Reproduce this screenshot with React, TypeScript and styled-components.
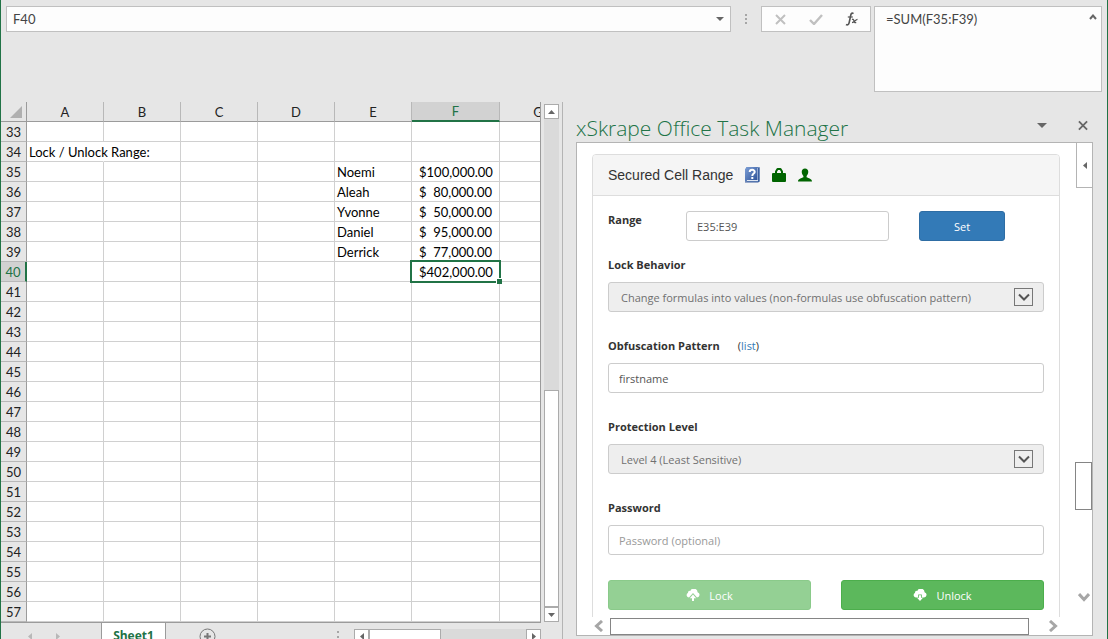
import React from "react";
import styled, { createGlobalStyle, css } from "styled-components";

const GREEN = "#217346";
const SHEET_FONT = `Lato, "Liberation Sans", sans-serif`;
const UI_FONT = `"Open Sans", "Noto Sans", sans-serif`;

const GlobalStyle = createGlobalStyle`
  *, *::before, *::after { box-sizing: border-box; }
  body { margin: 0; background: #e6e6e6; font-family: ${UI_FONT}; font-size: 11px; color: #333; }
  button, input, select, textarea { font: inherit; color: inherit; margin: 0; padding: 0; }
  button { border: 0; background: none; }
`;

const Window = styled.div`
  display: flex;
  flex-direction: column;
  height: 100vh;
  overflow: hidden;
  border-left: 1px solid ${GREEN};
  border-right: 1px solid ${GREEN};
`;

/* ---------- formula bar ---------- */

const FormulaBar = styled.header`
  display: flex;
  align-items: flex-start;
  flex: none;
  height: 102px;
  padding: 6px 5px 0;
  font-family: ${SHEET_FONT};
  font-size: 13px;
`;

const boxed = css`
  border: 1px solid #c0c0c0;
  background: #fdfdfd;
`;

const NameBox = styled.div`
  ${boxed}
  display: flex;
  align-items: center;
  flex: 725 1 725px;
  min-width: 0;
  height: 26px;
  padding-right: 5px;
`;

const NameInput = styled.input`
  flex: 1;
  min-width: 0;
  height: 24px;
  padding-left: 6px;
  border: 0;
  outline: 0;
  background: transparent;
  color: #444;
`;

const DropButton = styled.button`
  display: flex;
  align-items: center;
  justify-content: center;
  width: 10px;
  height: 20px;
`;

const Grip = styled.div`
  display: flex;
  flex-direction: column;
  align-items: center;
  justify-content: center;
  gap: 2px;
  flex: none;
  width: 30px;
  height: 26px;
`;

const Dot = styled.i`
  width: 2px;
  height: 2px;
  background: #a6a6a6;
`;

const FormulaActions = styled.div`
  ${boxed}
  display: flex;
  align-items: center;
  justify-content: space-around;
  flex: none;
  width: 110px;
  height: 26px;
  margin-right: 3px;
`;

const IconButton = styled.button`
  display: flex;
  align-items: center;
  justify-content: center;
  width: 24px;
  height: 24px;
`;

const FormulaBox = styled.div`
  ${boxed}
  display: flex;
  flex: 228 1 228px;
  min-width: 0;
  height: 86px;
  padding-right: 3px;
`;

const FormulaText = styled.textarea`
  flex: 1;
  min-width: 0;
  padding: 3px 0 0 11px;
  border: 0;
  outline: 0;
  resize: none;
  background: transparent;
  line-height: 18px;
  color: #444;
`;

/* ---------- worksheet ---------- */

const Workspace = styled.main`
  display: flex;
  flex: 1;
  min-height: 0;
`;

const SheetPane = styled.section`
  display: flex;
  flex-direction: column;
  flex: 562 1 562px;
  min-width: 0;
  border-right: 1px solid #b4b4b4;
`;

const SheetBody = styled.div`
  display: flex;
  flex: 1;
  min-height: 0;
`;

const GridClip = styled.div`
  flex: 1;
  min-width: 0;
  overflow: hidden;
  border-right: 1px solid #9b9b9b;
`;

const Grid = styled.table`
  table-layout: fixed;
  width: 576px;
  min-width: 100%;
  border-collapse: separate;
  border-spacing: 0;
  font-family: ${SHEET_FONT};
  font-size: 13px;
  line-height: 18px;
  color: #000;
`;

const GridCol = styled.col<{ $w: number }>`
  width: ${(p) => p.$w}px;
`;

const Corner = styled.td`
  height: 20px;
  padding: 0 4px 3px 0;
  text-align: right;
  vertical-align: bottom;
  line-height: 0;
  border-right: 1px solid #9b9b9b;
  border-bottom: 1px solid #9b9b9b;
`;

const ColHead = styled.th<{ $active?: boolean }>`
  height: 20px;
  padding: 0;
  font-weight: 400;
  text-align: center;
  color: #222;
  border-right: 1px solid #b8b8b8;
  border-bottom: 1px solid #9b9b9b;
  ${(p) =>
    p.$active &&
    css`
      background: #d2d2d2;
      color: ${GREEN};
      border-bottom: 2px solid ${GREEN};
    `}
`;

const RowHead = styled.th<{ $active?: boolean }>`
  height: 20px;
  padding: 1px 0 0;
  font-weight: 400;
  text-align: center;
  color: #222;
  border-right: 1px solid #9b9b9b;
  border-bottom: 1px solid #b8b8b8;
  ${(p) =>
    p.$active &&
    css`
      background: #d2d2d2;
      color: ${GREEN};
      border-right: 2px solid ${GREEN};
    `}
`;

const Cell = styled.td<{ $selected?: boolean; $spill?: boolean }>`
  position: relative;
  height: 20px;
  padding: 1px 2px 0;
  white-space: nowrap;
  background: #fff;
  border-right: 1px solid ${(p) => (p.$spill ? "#fff" : "#d0d0d0")};
  border-bottom: 1px solid #d0d0d0;
  ${(p) =>
    p.$spill &&
    css`
      z-index: 1;
      overflow: visible;
    `}
  ${(p) =>
    p.$selected &&
    css`
      &::after {
        content: "";
        position: absolute;
        z-index: 2;
        inset: -2px;
        border: 2px solid ${GREEN};
      }
    `}
`;

const FillHandle = styled.i`
  position: absolute;
  z-index: 3;
  right: -3px;
  bottom: -3px;
  width: 6px;
  height: 6px;
  background: ${GREEN};
  border-top: 1px solid #fff;
  border-left: 1px solid #fff;
`;

const Money = styled.span`
  display: flex;
  justify-content: space-between;
  padding: 0 5px;
`;

const VScroll = styled.div`
  display: flex;
  flex-direction: column;
  flex: none;
  width: 15px;
  margin: 2px 3px 0;
  background: #dadada;
`;

const ScrollButton = styled.button`
  display: flex;
  align-items: center;
  justify-content: center;
  flex: none;
  width: 15px;
  height: 15px;
  border: 1px solid #ababab;
  background: #fff;
`;

const VTrack = styled.div`
  flex: 1;
`;

const VThumb = styled.div`
  height: 217px;
  border: 1px solid #ababab;
  background: #fff;
`;

const TabBar = styled.nav`
  display: flex;
  align-items: flex-start;
  flex: none;
  height: 17px;
  margin-right: 21px;
  overflow: hidden;
  border-top: 1px solid #9b9b9b;
`;

const TabNav = styled.div`
  display: flex;
  align-items: center;
  gap: 24px;
  width: 100px;
  height: 26px;
  padding-left: 27px;
`;

const SheetTab = styled.button`
  width: 65px;
  height: 26px;
  background: #fff;
  border-left: 1px solid #9b9b9b;
  border-right: 1px solid #9b9b9b;
  font-size: 12px;
  font-weight: 700;
  line-height: 24px;
  color: ${GREEN};
`;

const AddTab = styled.button`
  display: flex;
  align-items: center;
  height: 26px;
  margin-left: 33px;
`;

const TabSpacer = styled.div`
  flex: 1;
`;

const TabGrip = styled.div`
  display: flex;
  flex-direction: column;
  gap: 3px;
  margin: 8px 15px 0 0;
`;

const HScroll = styled.div`
  display: flex;
  flex: none;
  width: 187px;
  height: 15px;
  margin-top: 6px;
  background: #dadada;
`;

const HThumb = styled.div`
  width: 72px;
  height: 15px;
  border: 1px solid #ababab;
  background: #fff;
`;

const HTrack = styled.div`
  flex: 1;
`;

/* ---------- task pane ---------- */

const TaskPane = styled.aside`
  display: flex;
  flex-direction: column;
  flex: 544 1 544px;
  min-width: 0;
  padding: 0 14px 3px 13px;
`;

const PaneHeader = styled.div`
  display: flex;
  align-items: center;
  flex: none;
  height: 40px;
  padding-top: 6px;
`;

const PaneTitle = styled.h1`
  flex: 1;
  margin: 6px 0 0;
  font-size: 21px;
  font-weight: 300;
  line-height: 28px;
  color: ${GREEN};
  white-space: nowrap;
`;

const PaneTools = styled.div`
  display: flex;
  align-items: center;
  gap: 24px;
  padding-right: 5px;
`;

const PaneBox = styled.div`
  display: grid;
  grid-template-columns: minmax(0, 1fr) 17px;
  grid-template-rows: minmax(0, 1fr) 18px;
  flex: 1;
  min-height: 0;
  border: 1px solid #b4b4b4;
  background: #fff;
`;

const PaneContent = styled.div`
  overflow: hidden;
  padding: 11px 15px 0;
`;

const Panel = styled.form`
  min-height: 600px;
  border: 1px solid #ddd;
  border-radius: 4px;
`;

const PanelHeading = styled.div`
  display: flex;
  align-items: center;
  height: 41px;
  padding: 0 15px;
  background: #f5f5f5;
  border-bottom: 1px solid #ddd;
  border-radius: 3px 3px 0 0;
`;

const PanelTitle = styled.h2`
  margin: 0 12px 0 0;
  font-family: "Liberation Sans", Arial, sans-serif;
  font-size: 14px;
  font-weight: 400;
  line-height: 20px;
`;

const HeadingIcons = styled.span`
  display: flex;
  align-items: center;
  gap: 12px;
  padding-bottom: 1px;
`;

const PanelBody = styled.div`
  padding: 15px;
`;

const RangeRow = styled.div`
  display: grid;
  grid-template-columns: 78px minmax(0, 1fr) 86px;
  padding-right: 39px;
  margin-bottom: 15px;
`;

const Field = styled.div`
  margin-bottom: 25px;
`;

const Label = styled.label`
  font-weight: 700;
  line-height: 18px;
`;

const LabelRow = styled.div`
  display: flex;
  gap: 18px;
  height: 18px;
  margin-bottom: 8px;
  line-height: 18px;
`;

const Link = styled.a`
  color: #337ab7;
  text-decoration: none;
`;

const TextInput = styled.input`
  width: 100%;
  height: 30px;
  padding: 0 10px;
  border: 1px solid #ccc;
  border-radius: 3px;
  background: #fff;
  color: #555;
  &::placeholder {
    color: #999;
    opacity: 1;
  }
`;

const RangeInput = styled(TextInput)`
  width: auto;
  min-width: 0;
  margin-right: 30px;
`;

const SelectBox = styled.div`
  display: flex;
  align-items: center;
  height: 30px;
  padding-right: 10px;
  border: 1px solid #ccc;
  border-radius: 3px;
  background: #eee;
`;

const Select = styled.select`
  appearance: none;
  flex: 1;
  min-width: 0;
  height: 28px;
  padding-left: 12px;
  border: 0;
  background: transparent;
  color: #707070;
  opacity: 1;
`;

const SelectArrow = styled.span`
  display: flex;
  align-items: center;
  justify-content: center;
  width: 19px;
  height: 18px;
  border: 1px solid #777;
`;

const Button = styled.button<{ $tone: "primary" | "success" }>`
  display: flex;
  align-items: center;
  justify-content: center;
  gap: 9px;
  height: 30px;
  border: 1px solid ${(p) => (p.$tone === "primary" ? "#2e6da4" : "#4cae4c")};
  border-radius: 3px;
  background: ${(p) => (p.$tone === "primary" ? "#337ab7" : "#5cb85c")};
  color: #fff;
  &:disabled {
    opacity: 0.65;
  }
`;

const Actions = styled.div`
  display: grid;
  grid-template-columns: 1fr 1fr;
  gap: 30px;
`;

const PaneVScroll = styled.div`
  display: flex;
  flex-direction: column;
  align-items: flex-end;
`;

const Flyout = styled.button`
  display: flex;
  align-items: center;
  justify-content: center;
  width: 16px;
  height: 45px;
  background: #fff;
  border-left: 1px solid #b4b4b4;
  border-bottom: 1px solid #b4b4b4;
`;

const PaneThumb = styled.div`
  width: 17px;
  height: 48px;
  border: 1px solid #858585;
`;

const ChevronButton = styled.button`
  display: flex;
  align-items: center;
  justify-content: center;
  width: 17px;
  height: 17px;
`;

const Flex = styled.div<{ $grow: number }>`
  flex: ${(p) => p.$grow} 1 0;
`;

const PaneHScroll = styled.div`
  display: flex;
  align-items: center;
  padding: 0 14px 0 13px;
`;

const PaneHThumb = styled.div`
  flex: 1;
  height: 17px;
  margin: 0 15px 0 3px;
  border: 1px solid #858585;
`;

/* ---------- icons ---------- */

const Triangle = ({ dir, w = 7, color = "#666" }: { dir: "up" | "down" | "left" | "right"; w?: number; color?: string }) => {
  const h = Math.ceil(w / 2);
  const shapes = {
    up: [w, h, `0,${h} ${w / 2},0 ${w},${h}`],
    down: [w, h, `0,0 ${w},0 ${w / 2},${h}`],
    left: [h, w, `${h},0 0,${w / 2} ${h},${w}`],
    right: [h, w, `0,0 ${h},${w / 2} 0,${w}`],
  } as const;
  const [sw, sh, pts] = shapes[dir];
  return (
    <svg width={sw} height={sh} aria-hidden="true">
      <polygon points={pts} fill={color} />
    </svg>
  );
};

const Chevron = ({ d, w, h, color, stroke = 3 }: { d: string; w: number; h: number; color: string; stroke?: number }) => (
  <svg width={w} height={h} viewBox={`0 0 ${w} ${h}`} aria-hidden="true">
    <path d={d} fill="none" stroke={color} strokeWidth={stroke} />
  </svg>
);

const CrossIcon = ({ size, color }: { size: number; color: string }) => (
  <svg width={size} height={size} viewBox="0 0 11 11" aria-hidden="true">
    <path d="M1 1l9 9M10 1l-9 9" stroke={color} strokeWidth="2" fill="none" />
  </svg>
);

const CheckIcon = () => (
  <svg width="14" height="11" viewBox="0 0 14 11" aria-hidden="true">
    <path d="M1 6l4 4 8-9" stroke="#c0c0c0" strokeWidth="2.4" fill="none" />
  </svg>
);

const FxIcon = () => (
  <svg width="14" height="14" viewBox="0 0 14 14" aria-hidden="true" fill="none" stroke="#555">
    <path d="M8.5 1.6C7.2.6 6.2 1.2 5.8 3L4.2 10.5C3.8 12.6 2.6 13.4 1 12.5" strokeWidth="1.6" />
    <path d="M2.8 5h5" strokeWidth="1.2" />
    <path d="M7 7.5c1.2-.6 1.6 0 2 1.4s.8 2.2 2.2 1.5M12.5 7.3c-1.5.1-3.6 3.3-5.5 3.4" strokeWidth="1.3" />
  </svg>
);

const HelpBookIcon = () => (
  <svg width="15" height="17" viewBox="0 0 15 17" aria-hidden="true">
    <defs>
      <linearGradient id="book" x1="0" y1="0" x2="1" y2="1">
        <stop offset="0" stopColor="#7d9fd6" />
        <stop offset="1" stopColor="#2a4f96" />
      </linearGradient>
    </defs>
    <path d="M1.5 1.5h13v14h-13z" fill="#dfe7f3" stroke="#6f8dbd" />
    <path d="M0 3l2-2h10.5v13H2l-2 2z" fill="url(#book)" />
    <path d="M0 16h13.5V2" fill="none" stroke="#3c5f9f" />
    <path d="M4.7 6c.1-2.9 5.2-2.8 5 0C9.6 7.7 7.3 7.6 7.3 10" fill="none" stroke="#fff" strokeWidth="2" />
    <path d="M6.3 11h2v2h-2z" fill="#fff" />
  </svg>
);

const LockIcon = () => (
  <svg width="14" height="14" viewBox="0 0 14 14" aria-hidden="true">
    <path d="M4 7V3.5L5.5 1h3L10 3.5V7" fill="none" stroke="#006400" strokeWidth="2" strokeLinejoin="round" />
    <rect y="5" width="14" height="9" rx="1" fill="#006400" />
  </svg>
);

const UserIcon = () => (
  <svg width="14" height="14" viewBox="0 0 15 14" aria-hidden="true">
    <path d="M7.5 0C9.7 0 11 1.5 11 3.6c0 1.7-.7 3.4-1.800 4.400v1.400c2 1 5.800 1.700 5.800 4.600H0c0-2.900 3.800-3.600 5.800-4.600V8C4.700 7 4 5.300 4 3.600 4 1.500 5.300 0 7.500 0z" fill="#006400" />
  </svg>
);

const CloudIcon = ({ up }: { up?: boolean }) => (
  <svg width="14" height="12" viewBox="0 0 14 12" aria-hidden="true" fill="#fff">
    {up ? (
      <>
        <path d="M3 8.5L7 4l4 4.5A2.7 2.7 0 0011.6 3.2 3.8 3.8 0 004.3 1.9 2.1 2.1 0 001.9 4 2.4 2.4 0 003 8.5z" />
        <path d="M7 5.500l3.200 3.700H8V12H6V9.200H3.800z" />
      </>
    ) : (
      <>
        <path d="M3 8.5h2.200V5.500h3.600v3H11A2.700 2.700 0 0011.600 3.200 3.800 3.800 0 004.300 1.900 2.100 2.100 0 001.900 4 2.400 2.400 0 003 8.500z" />
        <path d="M6 6.300h2v2.500h2L7 12 4 8.800h2z" />
      </>
    )}
  </svg>
);

const AddIcon = () => (
  <svg width="17" height="17" viewBox="0 0 17 17" aria-hidden="true" fill="none" stroke="#777">
    <circle cx="8.5" cy="8.5" r="7.5" />
    <path d="M8.5 5v7M5 8.5h7" strokeWidth="2" />
  </svg>
);

/* ---------- data ---------- */

const columns = ["A", "B", "C", "D", "E", "F", "G"];
const rows = Array.from({ length: 25 }, (_, i) => 33 + i);
const people: Record<number, [string, string]> = {
  35: ["Noemi", "100,000.00"],
  36: ["Aleah", "80,000.00"],
  37: ["Yvonne", "50,000.00"],
  38: ["Daniel", "95,000.00"],
  39: ["Derrick", "77,000.00"],
  40: ["", "402,000.00"],
};

function Worksheet() {
  return (
    <Grid>
      <colgroup>
        <GridCol $w={26} />
        {columns.map((c) => (
          <GridCol key={c} $w={c === "F" ? 88 : 77} />
        ))}
      </colgroup>
      <thead>
        <tr>
          <Corner>
            <svg width="12" height="12" aria-hidden="true">
              <polygon points="12,0 12,12 0,12" fill="#b0b0b0" />
            </svg>
          </Corner>
          {columns.map((c) => (
            <ColHead key={c} scope="col" $active={c === "F"}>
              {c}
            </ColHead>
          ))}
        </tr>
      </thead>
      <tbody>
        {rows.map((r) => (
          <tr key={r}>
            <RowHead scope="row" $active={r === 40}>
              {r}
            </RowHead>
            {columns.map((c) => {
              const title = r === 34 && c === "A";
              const selected = r === 40 && c === "F";
              const entry = people[r];
              return (
                <Cell key={c} $spill={title} $selected={selected}>
                  {title && "Lock / Unlock Range:"}
                  {entry && c === "E" && entry[0]}
                  {entry && c === "F" && (
                    <Money>
                      <span>$</span>
                      <span>{entry[1]}</span>
                    </Money>
                  )}
                  {selected && <FillHandle />}
                </Cell>
              );
            })}
          </tr>
        ))}
      </tbody>
    </Grid>
  );
}

function SelectField({ id, label, value }: { id: string; label: string; value: string }) {
  return (
    <Field>
      <LabelRow>
        <Label htmlFor={id}>{label}</Label>
      </LabelRow>
      <SelectBox>
        <Select id={id} disabled defaultValue={value}>
          <option>{value}</option>
        </Select>
        <SelectArrow>
          <Chevron d="M1 1.5l5 5 5-5" w={12} h={8} color="#555" stroke={2} />
        </SelectArrow>
      </SelectBox>
    </Field>
  );
}

export default function App() {
  return (
    <Window>
      <GlobalStyle />
      <FormulaBar>
        <NameBox>
          <NameInput aria-label="Name box" defaultValue="F40" />
          <DropButton aria-label="Show names">
            <Triangle dir="down" w={8} />
          </DropButton>
        </NameBox>
        <Grip>
          <Dot />
          <Dot />
          <Dot />
        </Grip>
        <FormulaActions>
          <IconButton aria-label="Cancel">
            <CrossIcon size={11} color="#c0c0c0" />
          </IconButton>
          <IconButton aria-label="Enter">
            <CheckIcon />
          </IconButton>
          <IconButton aria-label="Insert function">
            <FxIcon />
          </IconButton>
        </FormulaActions>
        <FormulaBox>
          <FormulaText aria-label="Formula" defaultValue="=SUM(F35:F39)" />
          <DropButton aria-label="Collapse formula bar">
            <Chevron d="M1 5l3-3.5L7 5" w={8} h={6} color="#666" stroke={2} />
          </DropButton>
        </FormulaBox>
      </FormulaBar>
      <Workspace>
        <SheetPane>
          <SheetBody>
            <GridClip>
              <Worksheet />
            </GridClip>
            <VScroll>
              <ScrollButton aria-label="Scroll up">
                <Triangle dir="up" />
              </ScrollButton>
              <VTrack />
              <VThumb />
              <ScrollButton aria-label="Scroll down">
                <Triangle dir="down" />
              </ScrollButton>
            </VScroll>
          </SheetBody>
          <TabBar>
            <TabNav>
              <Triangle dir="left" color="#b8b8b8" />
              <Triangle dir="right" color="#b8b8b8" />
            </TabNav>
            <SheetTab>Sheet1</SheetTab>
            <AddTab aria-label="New sheet">
              <AddIcon />
            </AddTab>
            <TabSpacer />
            <TabGrip>
              <Dot />
              <Dot />
            </TabGrip>
            <HScroll>
              <ScrollButton aria-label="Scroll left">
                <Triangle dir="left" />
              </ScrollButton>
              <HThumb />
              <HTrack />
              <ScrollButton aria-label="Scroll right">
                <Triangle dir="right" />
              </ScrollButton>
            </HScroll>
          </TabBar>
        </SheetPane>
        <TaskPane>
          <PaneHeader>
            <PaneTitle>xSkrape Office Task Manager</PaneTitle>
            <PaneTools>
              <IconButton aria-label="Task pane options">
                <Triangle dir="down" w={10} />
              </IconButton>
              <DropButton aria-label="Close">
                <CrossIcon size={11} color="#666" />
              </DropButton>
            </PaneTools>
          </PaneHeader>
          <PaneBox>
            <PaneContent>
              <Panel onSubmit={(e) => e.preventDefault()}>
                <PanelHeading>
                  <PanelTitle>Secured Cell Range</PanelTitle>
                  <HeadingIcons>
                    <HelpBookIcon />
                    <LockIcon />
                    <UserIcon />
                  </HeadingIcons>
                </PanelHeading>
                <PanelBody>
                  <RangeRow>
                    <Label htmlFor="range">Range</Label>
                    <RangeInput id="range" defaultValue="E35:E39" />
                    <Button type="button" $tone="primary">
                      Set
                    </Button>
                  </RangeRow>
                  <SelectField
                    id="behavior"
                    label="Lock Behavior"
                    value="Change formulas into values (non-formulas use obfuscation pattern)"
                  />
                  <Field>
                    <LabelRow>
                      <Label htmlFor="pattern">Obfuscation Pattern</Label>
                      <span>
                        (<Link href="#list">list</Link>)
                      </span>
                    </LabelRow>
                    <TextInput id="pattern" defaultValue="firstname" />
                  </Field>
                  <SelectField id="level" label="Protection Level" value="Level 4 (Least Sensitive)" />
                  <Field>
                    <LabelRow>
                      <Label htmlFor="password">Password</Label>
                    </LabelRow>
                    <TextInput id="password" type="password" placeholder="Password (optional)" />
                  </Field>
                  <Actions>
                    <Button type="button" $tone="success" disabled>
                      <CloudIcon up />
                      Lock
                    </Button>
                    <Button type="button" $tone="success">
                      <CloudIcon />
                      Unlock
                    </Button>
                  </Actions>
                </PanelBody>
              </Panel>
            </PaneContent>
            <PaneVScroll>
              <Flyout aria-label="Expand">
                <Triangle dir="left" />
              </Flyout>
              <Flex $grow={275} />
              <PaneThumb />
              <Flex $grow={78} />
              <ChevronButton aria-label="Scroll pane down">
                <Chevron d="M1 2l5 5.5L11 2" w={12} h={10} color="#a6a6a6" />
              </ChevronButton>
              <Flex $grow={12} />
            </PaneVScroll>
            <PaneHScroll>
              <ChevronButton aria-label="Scroll pane left">
                <Chevron d="M8 1L2.5 6 8 11" w={10} h={12} color="#a6a6a6" />
              </ChevronButton>
              <PaneHThumb />
              <ChevronButton aria-label="Scroll pane right">
                <Chevron d="M2 1l5.5 5L2 11" w={10} h={12} color="#a6a6a6" />
              </ChevronButton>
            </PaneHScroll>
          </PaneBox>
        </TaskPane>
      </Workspace>
    </Window>
  );
}
